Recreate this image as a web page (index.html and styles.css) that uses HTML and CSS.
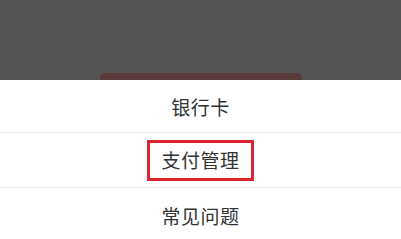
FILE: index.html
```html
<!DOCTYPE html>
<html lang="zh">
<head>
<meta charset="utf-8">
<link rel="stylesheet" href="styles.css">
</head>
<body>
<div class="overlay">
  <div class="peek"></div>
</div>
<div class="sheet">
  <div class="row">银行卡</div>
  <div class="row"><span class="hl">支付管理</span></div>
  <div class="row">常见问题</div>
</div>
</body>
</html>
```
FILE: styles.css
```css
html, body {
  margin: 0;
  padding: 0;
  width: 401px;
  height: 239px;
  overflow: hidden;
  background: #fff;
  font-family: "Noto Sans CJK SC", "Noto Sans", sans-serif;
}
.overlay {
  height: 80px;
  background: #545454;
  display: flex;
  align-items: flex-end;
  justify-content: center;
}
.peek {
  width: 202px;
  height: 7px;
  margin-left: 1px;
  background: #5a3a38;
  border-radius: 5px 5px 0 0;
}
.sheet {
  display: flex;
  flex-direction: column;
}
.row {
  height: 52px;
  display: flex;
  align-items: center;
  justify-content: center;
  font-size: 19px;
  color: #333;
  border-bottom: 1px solid #eeeeee;
  letter-spacing: 0.5px;
}
.row + .row {
  height: 54px;
}
.hl {
  display: inline-block;
  box-sizing: border-box;
  width: 107px;
  height: 41px;
  border: 3px solid #d9262c;
  text-align: center;
  line-height: 34px;
}
```
